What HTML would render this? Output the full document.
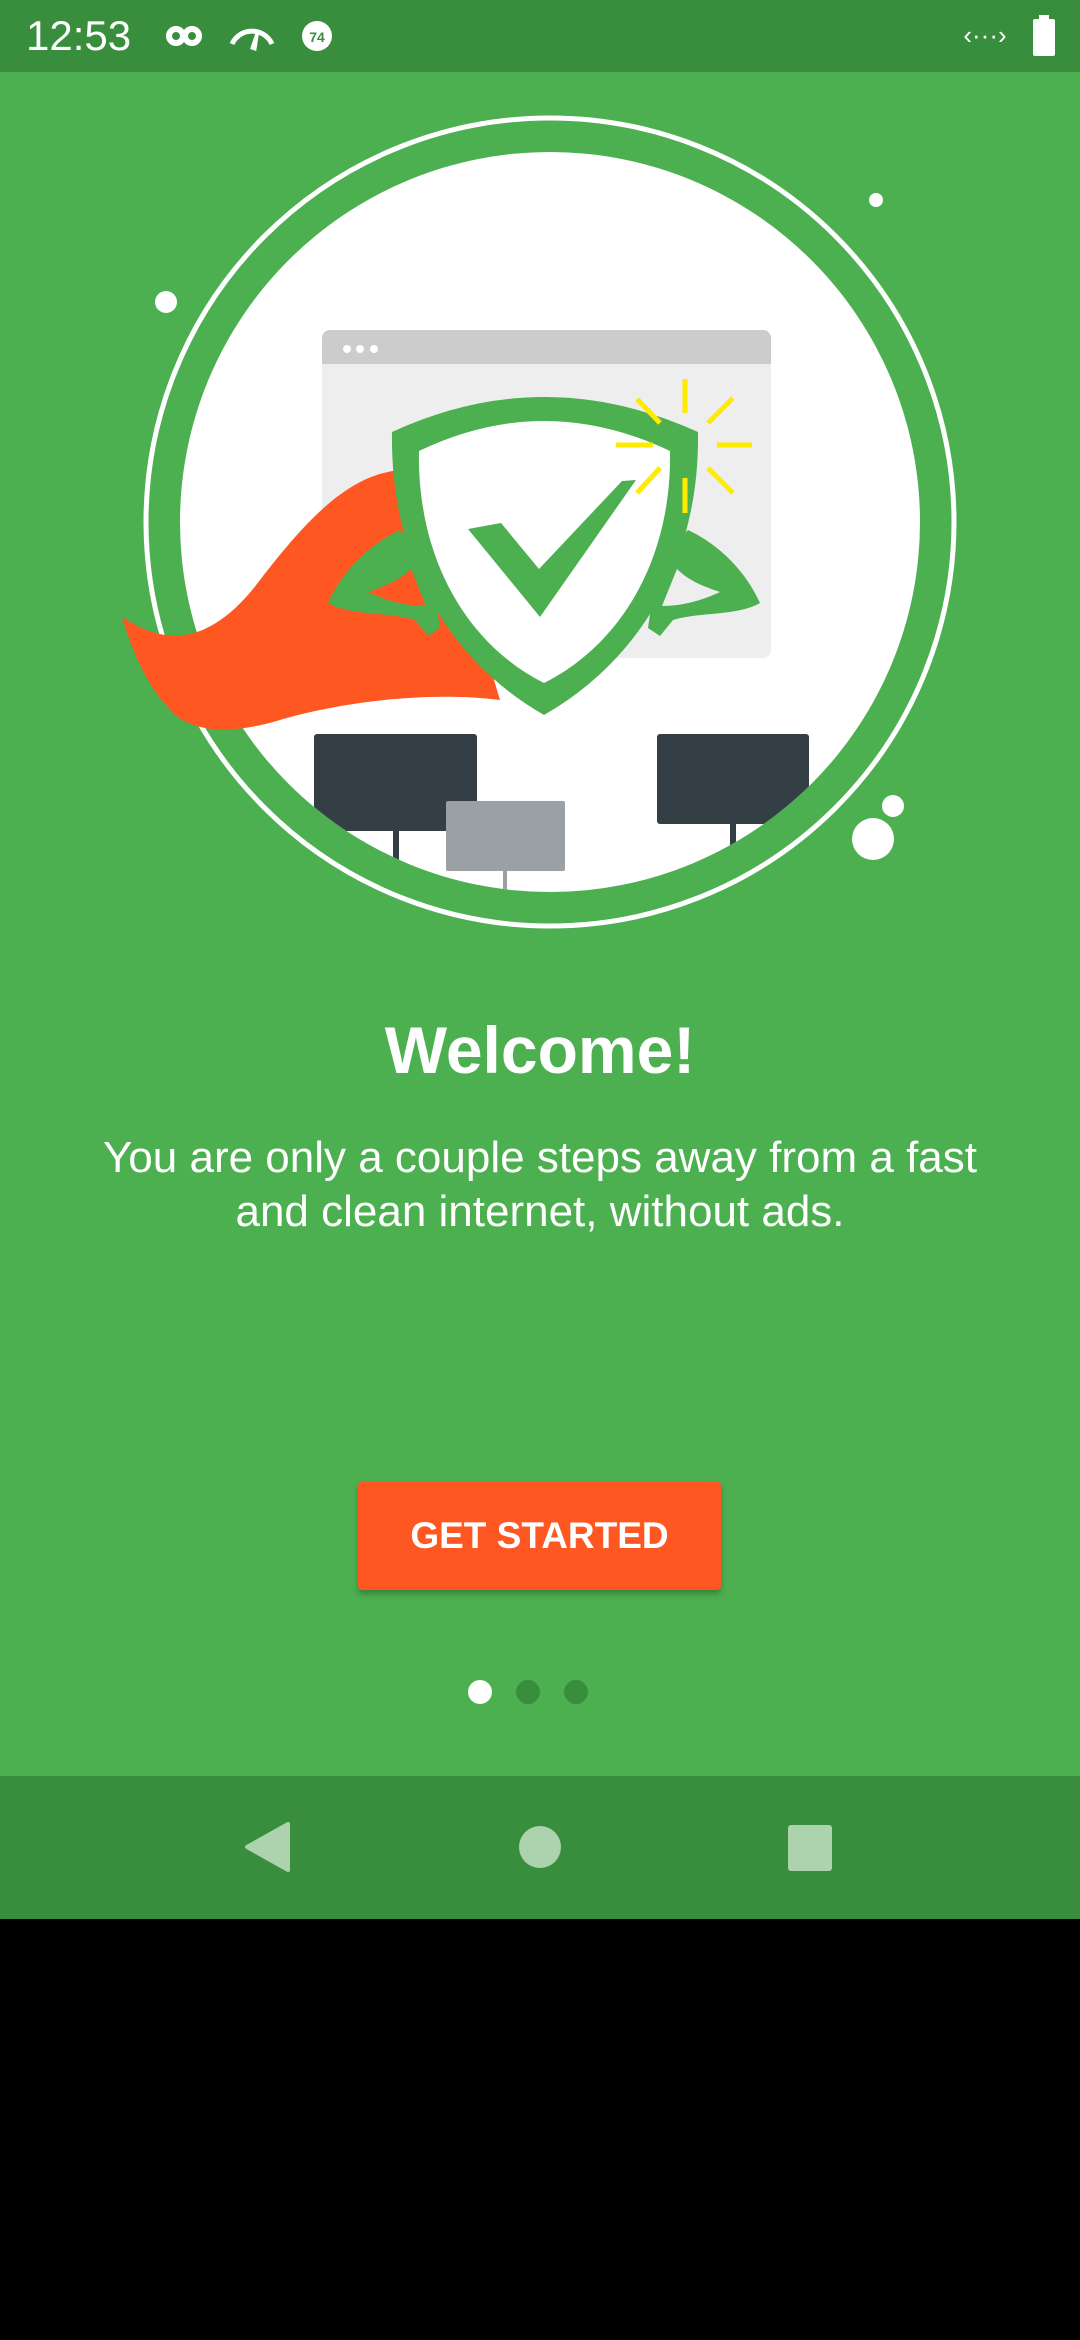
<!DOCTYPE html>
<html><head><meta charset="utf-8"><style>
html,body{margin:0;padding:0}
body{width:1080px;height:2340px;background:#000;position:relative;overflow:hidden;font-family:"Liberation Sans",sans-serif}
.main{position:absolute;left:0;top:0;width:1080px;height:1776px;background:#4caf50}
.status{position:absolute;left:0;top:0;width:1080px;height:72px;background:#388e3c;color:#fff}
.nav{position:absolute;left:0;top:1776px;width:1080px;height:143px;background:#388e3c}
h1{position:absolute;top:1012px;left:0;width:1080px;text-align:center;margin:0;color:#fff;font-size:66px;font-weight:bold}
.sub{position:absolute;top:1131px;left:0;width:1080px;text-align:center;color:#fff;font-size:44px;line-height:54px}
.btn{position:absolute;left:358px;top:1482px;width:363px;height:108px;background:#ff5722;border-radius:4px;box-shadow:0 4px 6px rgba(0,0,0,.25);color:#fff;font-size:37px;font-weight:bold;text-align:center;line-height:108px}
.dot{position:absolute;top:1680px;width:24px;height:24px;border-radius:50%;background:#388e3c}
</style></head><body>
<div class="main"></div>
<div class="status">
<div style="position:absolute;left:26px;top:12px;font-size:42px">12:53</div>
<svg style="position:absolute;left:0;top:0" width="1080" height="72">
<g fill="none" stroke="#fff" stroke-width="6"><circle cx="176" cy="36" r="7"/><circle cx="192" cy="36" r="7"/></g>
<path d="M232 44 A22 22 0 0 1 272 44" fill="none" stroke="#fff" stroke-width="5"/>
<path d="M252 48 L258 30 L255 49Z" fill="#fff" stroke="#fff" stroke-width="3"/>
<circle cx="317" cy="36" r="15" fill="#fff"/>
<text x="317" y="42" font-size="14" text-anchor="middle" fill="#388e3c" font-weight="bold">74</text>
<text x="985" y="44" font-size="26" text-anchor="middle" fill="#fff">‹···›</text>
<rect x="1033" y="19" width="22" height="37" rx="2" fill="#fff"/><rect x="1039" y="15" width="10" height="5" fill="#fff"/>
</svg>
</div>
<svg style="position:absolute;left:0;top:0" width="1080" height="1000">
<defs><clipPath id="d"><circle cx="550" cy="522" r="370"/></clipPath></defs>
<circle cx="550" cy="522" r="404" fill="none" stroke="#fff" stroke-width="5"/>
<circle cx="550" cy="522" r="370" fill="#fff"/>
<circle cx="166" cy="302" r="11" fill="#fff"/>
<circle cx="876" cy="200" r="7" fill="#fff"/>
<circle cx="893" cy="806" r="11" fill="#fff"/>
<circle cx="873" cy="839" r="21" fill="#fff"/>
<g clip-path="url(#d)">
<rect x="322" y="330" width="449" height="328" rx="8" fill="#eeeeee"/>
<path d="M322 364 V338 a8 8 0 0 1 8 -8 H763 a8 8 0 0 1 8 8 V364Z" fill="#cccccc"/>
<circle cx="347" cy="349" r="4" fill="#fff"/><circle cx="360" cy="349" r="4" fill="#fff"/><circle cx="374" cy="349" r="4" fill="#fff"/>
<rect x="314" y="734" width="163" height="97" rx="3" fill="#343e45"/>
<rect x="393" y="831" width="6" height="60" fill="#343e45"/>
<rect x="446" y="801" width="119" height="70" rx="2" fill="#9aa0a4"/>
<rect x="503" y="871" width="4" height="40" fill="#9aa0a4"/>
<rect x="657" y="734" width="152" height="90" rx="3" fill="#343e45"/>
<rect x="730" y="824" width="6" height="60" fill="#343e45"/>
</g>
<path d="M122 617 C170 650 215 640 260 580 C310 515 350 475 400 470 L440 500 L500 700 C420 690 330 705 280 720 C240 732 200 735 175 715 C150 690 135 660 122 617Z" fill="#ff5722"/>
<path d="M400 530 C368 545 342 572 328 603 C350 616 390 612 415 620 L428 636 L440 628 L430 560Z" fill="#4caf50"/>
<path d="M368 592 C386 586 400 580 411 569 L426 606 C405 606 385 600 368 592Z" fill="#ff5722"/>
<path d="M688 530 C720 545 746 572 760 603 C738 616 698 612 673 620 L660 636 L648 628 L658 560Z" fill="#4caf50"/>
<path d="M720 592 C702 586 688 580 677 569 L662 606 C683 606 703 600 720 592Z" fill="#eeeeee"/>
<path d="M392 432 Q544 362 698 432 C700 560 640 660 544 715 C448 660 390 560 392 432Z" fill="#4caf50"/>
<path d="M419 451 Q544 391 670 451 C672 560 620 645 544 683 C468 645 417 560 419 451Z" fill="#fff"/>
<path d="M468 529 L501 523 L539 569 L622 481 L636 480 L540 617Z" fill="#4caf50"/>
<g stroke="#ffeb00" stroke-width="5">
<line x1="685" y1="379" x2="685" y2="413"/><line x1="685" y1="478" x2="685" y2="513"/>
<line x1="717" y1="445" x2="752" y2="445"/><line x1="616" y1="445" x2="653" y2="445"/>
<line x1="660" y1="423" x2="637" y2="399"/><line x1="708" y1="423" x2="733" y2="398"/>
<line x1="660" y1="468" x2="637" y2="493"/><line x1="708" y1="468" x2="733" y2="493"/>
</g>
</svg>
<h1>Welcome!</h1>
<div class="sub">You are only a couple steps away from a fast<br>and clean internet, without ads.</div>
<div class="btn">GET STARTED</div>
<div class="dot" style="left:468px;background:#fff"></div>
<div class="dot" style="left:516px"></div>
<div class="dot" style="left:564px"></div>
<div class="nav">
<svg width="1080" height="143">
<path d="M288 48 L288 94 L247 71Z" fill="#acd3ad" stroke="#acd3ad" stroke-width="4" stroke-linejoin="round"/>
<circle cx="540" cy="71" r="21" fill="#acd3ad"/>
<rect x="788" y="49" width="44" height="46" rx="3" fill="#acd3ad"/>
</svg>
</div>
</body></html>
